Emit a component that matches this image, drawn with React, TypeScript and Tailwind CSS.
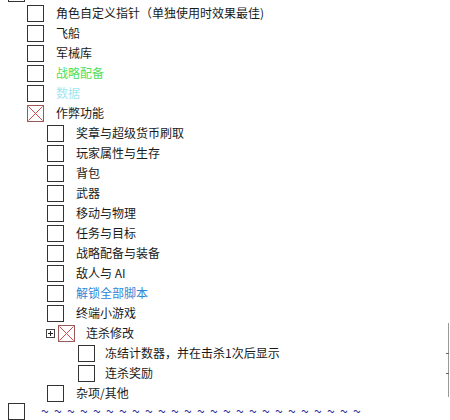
import React from "react";

type Item = {
  label?: string;
  level: number;
  checked?: boolean;
  expander?: boolean;
  color?: string;
  tildes?: boolean;
};

const items: Item[] = [
  { level: 0, label: "" },
  { level: 1, label: "角色自定义指针（单独使用时效果最佳)" },
  { level: 1, label: "飞船" },
  { level: 1, label: "军械库" },
  { level: 1, label: "战略配备", color: "text-[#4fe05a]" },
  { level: 1, label: "数据", color: "text-[#9fe6f2]" },
  { level: 1, label: "作弊功能", checked: true },
  { level: 2, label: "奖章与超级货币刷取" },
  { level: 2, label: "玩家属性与生存" },
  { level: 2, label: "背包" },
  { level: 2, label: "武器" },
  { level: 2, label: "移动与物理" },
  { level: 2, label: "任务与目标" },
  { level: 2, label: "战略配备与装备" },
  { level: 2, label: "敌人与 AI" },
  { level: 2, label: "解锁全部脚本", color: "text-[#2f86d6]" },
  { level: 2, label: "终端小游戏" },
  { level: 2, label: "连杀修改", checked: true, expander: true },
  { level: 3, label: "冻结计数器，并在击杀1次后显示" },
  { level: 3, label: "连杀奖励" },
  { level: 2, label: "杂项/其他" },
];

const indent: Record<number, string> = {
  0: "pl-[8px]",
  1: "pl-[27px]",
  2: "pl-[47px]",
  3: "pl-[78px]",
};

function Checkbox({ checked }: { checked?: boolean }) {
  if (checked) {
    return (
      <div className="w-[17px] h-[17px] border border-[#9a5a5a] bg-white shrink-0">
        <svg viewBox="0 0 15 15" className="w-full h-full">
          <path d="M0.5 0.5 L14.5 14.5 M14.5 0.5 L0.5 14.5" stroke="#d24a4a" strokeWidth="1" fill="none" />
        </svg>
      </div>
    );
  }
  return <div className="w-[17px] h-[17px] border border-[#333] bg-white shrink-0" />;
}

function Expander() {
  return (
    <div className="w-[9px] h-[9px] border border-[#444] flex items-center justify-center mr-[3px] shrink-0">
      <svg viewBox="0 0 7 7" className="w-[7px] h-[7px]">
        <path d="M1 3.5 H6 M3.5 1 V6" stroke="#222" strokeWidth="1" fill="none" />
      </svg>
    </div>
  );
}

function Row({ item }: { item: Item }) {
  const pad = item.expander ? "pl-[46px]" : indent[item.level];
  return (
    <div className={`h-[20px] flex items-center ${pad}`}>
      {item.expander && <Expander />}
      <Checkbox checked={item.checked} />
      <span
        className={`${item.level === 3 ? "ml-[10px]" : item.expander ? "ml-[11px]" : "ml-[12px]"} text-[12px] whitespace-nowrap leading-none ${item.color ?? "text-[#1a1a1a]"}`}
      >
        {item.label}
      </span>
    </div>
  );
}

export default function App() {
  return (
    <div
      className="relative w-[450px] h-[420px] bg-white overflow-hidden"
      style={{ fontFamily: '"Noto Sans CJK SC", "Noto Sans", sans-serif' }}
    >
      <div className="-mt-[17px]">
        {items.map((item, i) => (
          <Row key={i} item={item} />
        ))}
        {/* last row, cut by the window bottom */}
        <div className="h-[17px] flex items-start pl-[8px]">
          <Checkbox />
          <div className="flex ml-[16px] mt-[1px] text-[14px] text-[#2b2c9c] leading-[14px]">
            {Array.from({ length: 25 }).map((_, i) => (
              <span key={i} className="w-[13px]">~</span>
            ))}
          </div>
        </div>
      </div>
      {/* thin frame edge on the right */}
      <div className="absolute right-[1px] top-[323px] h-[74px] w-px bg-[#9a9a9a]" />
      <div className="absolute right-[1px] top-[353px] h-px w-[3px] bg-[#666]" />
      <div className="absolute right-[1px] top-[373px] h-px w-[3px] bg-[#666]" />
    </div>
  );
}
